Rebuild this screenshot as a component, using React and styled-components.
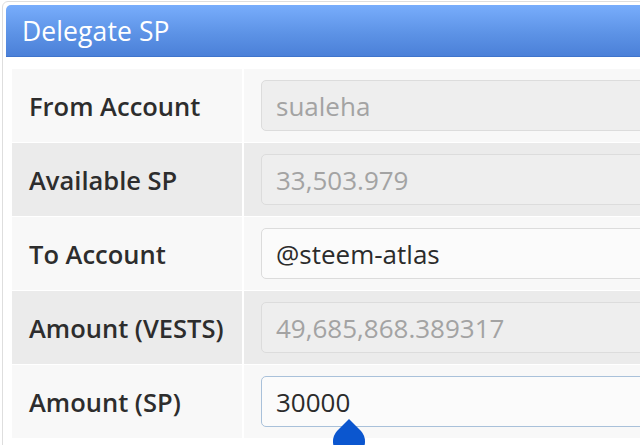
import React from 'react';
import styled, { createGlobalStyle } from 'styled-components';

const GlobalStyle = createGlobalStyle`
  html, body {
    margin: 0;
    padding: 0;
    background: #ffffff;
  }
  body {
    font-family: "Open Sans", "Liberation Sans", sans-serif;
  }
`;

const Page = styled.div`
  width: 640px;
  height: 445px;
  overflow: hidden;
  background: #ffffff;
  padding: 1px 0 0 2px;
  box-sizing: border-box;
`;

const Panel = styled.div`
  width: 720px;
  height: 460px;
  border: 1px solid #dedede;
  border-radius: 6px;
  padding: 3px 3px;
  box-sizing: border-box;
  background: #ffffff;
`;

const Header = styled.div`
  height: 51px;
  display: flex;
  align-items: center;
  padding-left: 16px;
  border-radius: 5px 5px 0 0;
  background: linear-gradient(to bottom, #78adfc 0%, #5d93e6 55%, #4b80d8 100%);
  border-bottom: 1px solid #3f74cc;
  color: #ffffff;
  font-size: 26.5px;
  font-weight: 400;
  letter-spacing: 0.1px;
`;

const Body = styled.div`
  padding: 12px 0 0 6px;
`;

const Table = styled.div`
  display: grid;
  grid-template-columns: 232px 1fr;
  row-gap: 1px;
  background: #ffffff;
`;

const Label = styled.div`
  height: 73px;
  display: flex;
  align-items: center;
  padding-left: 17px;
  background: ${(p) => (p.$shade ? '#ebebeb' : '#f8f8f8')};
  border-right: 2px solid #ffffff;
  color: #2d2d2d;
  font-size: 25.5px;
  font-weight: 600;
`;

const Cell = styled.div`
  height: 73px;
  display: flex;
  align-items: center;
  padding-left: 17px;
  background: ${(p) => (p.$shade ? '#ebebeb' : '#f8f8f8')};
`;

const Field = styled.div`
  position: relative;
  flex: 1;
  height: 51px;
  display: flex;
  align-items: center;
  padding-left: 14px;
  box-sizing: border-box;
  border-radius: 5px;
  border: 1px solid ${(p) => (p.$focus ? '#a9c1da' : '#dcdcdc')};
  background: ${(p) => (p.$disabled ? '#eeeeee' : '#fbfbfb')};
  color: ${(p) => (p.$disabled ? '#a3a3a3' : '#2b2b2b')};
  font-size: 26px;
`;

const Handle = styled.svg`
  position: absolute;
  left: 70px;
  top: 42px;
`;

const rows = [
  { label: 'From Account', value: 'sualeha', disabled: true },
  { label: 'Available SP', value: '33,503.979', disabled: true },
  { label: 'To Account', value: '@steem-atlas' },
  { label: 'Amount (VESTS)', value: '49,685,868.389317', disabled: true },
  { label: 'Amount (SP)', value: '30000', focus: true },
];

export default function App() {
  return (
    <>
      <GlobalStyle />
      <Page>
        <Panel>
          <Header>Delegate SP</Header>
          <Body>
            <Table>
              {rows.map((row, i) => (
                <React.Fragment key={row.label}>
                  <Label $shade={i % 2 === 1}>{row.label}</Label>
                  <Cell $shade={i % 2 === 1}>
                    <Field $disabled={row.disabled} $focus={row.focus}>
                      {row.value}
                      {row.focus && (
                        <Handle width="34" height="30" viewBox="0 0 34 30">
                          <path d="M17 0 L29 12 A16 16 0 1 1 5 12 Z" fill="#0b56cf" />
                        </Handle>
                      )}
                    </Field>
                  </Cell>
                </React.Fragment>
              ))}
            </Table>
          </Body>
        </Panel>
      </Page>
    </>
  );
}
